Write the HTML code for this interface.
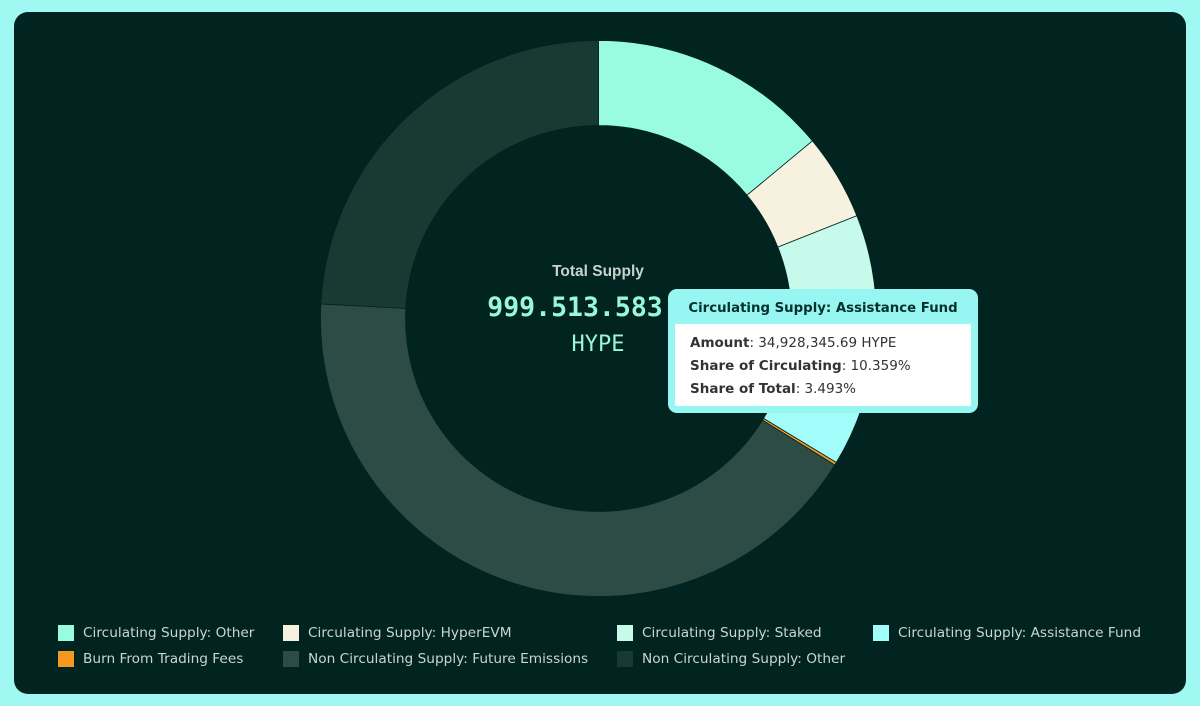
<!DOCTYPE html><html><head><style>
body{margin:0;width:1200px;height:706px;background:#9ff9f2;overflow:hidden;font-family:"DejaVu Sans",Verdana,sans-serif}
.card{position:absolute;left:14px;top:12px;width:1172px;height:682px;background:#022420;border-radius:14px}
svg{position:absolute;left:0;top:0}
.t1{position:absolute;left:498px;top:263px;width:200px;text-align:center;color:#c8d2ce;font-family:"Liberation Sans",sans-serif;font-weight:bold;font-size:15.5px}
.t2{position:absolute;left:425px;top:292px;width:300px;text-align:center;color:#98f7dd;font-family:"DejaVu Sans Mono","Liberation Mono",monospace;font-weight:bold;font-size:26.5px}
.t3{position:absolute;left:498px;top:332px;width:200px;text-align:center;color:#98f7dd;font-family:"DejaVu Sans Mono","Liberation Mono",monospace;font-size:22px}
.tip{position:absolute;left:668px;top:289px;width:310px;height:124px;background:#98f6f2;border-radius:9px}
.tip h{position:absolute;left:0;width:310px;top:12px;text-align:center;font-weight:bold;font-size:13.3px;color:#06302b}
.tip .b{position:absolute;left:7px;top:35px;width:296px;height:82px;background:#fff;border-radius:2px;font-size:13.5px;color:#333}
.tip .b div{position:absolute;left:15px;white-space:nowrap}
.leg{position:absolute;font-size:13.7px;color:#c8d5d1;white-space:nowrap}
.sq{position:absolute;width:16px;height:16px}
</style></head><body>
<div class="card"></div>
<svg width="1200" height="706" id="s"></svg>
<div class="t1">Total Supply</div>
<div class="t2">999.513.583</div>
<div class="t3">HYPE</div>
<div class="tip"><h>Circulating Supply: Assistance Fund</h>
<div class="b"><div style="top:11px"><b>Amount</b>: 34,928,345.69 HYPE</div>
<div style="top:34px"><b>Share of Circulating</b>: 10.359%</div>
<div style="top:57px"><b>Share of Total</b>: 3.493%</div></div></div>
<div class="sq" style="left:58px;top:625px;background:#98fbe2"></div><div class="leg" style="left:83px;top:625px">Circulating Supply: Other</div>
<div class="sq" style="left:283px;top:625px;background:#f7f1df"></div><div class="leg" style="left:308px;top:625px">Circulating Supply: HyperEVM</div>
<div class="sq" style="left:617px;top:625px;background:#c6fbec"></div><div class="leg" style="left:642px;top:625px">Circulating Supply: Staked</div>
<div class="sq" style="left:873px;top:625px;background:#a2fdfa"></div><div class="leg" style="left:898px;top:625px">Circulating Supply: Assistance Fund</div>
<div class="sq" style="left:58px;top:651px;background:#f39a1e"></div><div class="leg" style="left:83px;top:651px">Burn From Trading Fees</div>
<div class="sq" style="left:283px;top:651px;background:#2c4c45"></div><div class="leg" style="left:308px;top:651px">Non Circulating Supply: Future Emissions</div>
<div class="sq" style="left:617px;top:651px;background:#173a33"></div><div class="leg" style="left:642px;top:651px">Non Circulating Supply: Other</div>
<script>
var cx=598.5,cy=318.5,R=278,r=193;
var seg=[[0,50.3,"#98fbe2"],[50.3,68.3,"#f7f1df"],[68.3,108.8,"#c6fbec"],[108.8,121.2,"#a2fdfa"],[121.2,121.8,"#f39a1e"],[121.8,273,"#2c4c45"],[273,360,"#173a33"]];
function p(a,rad){a=a*Math.PI/180;return [cx+rad*Math.sin(a),cy-rad*Math.cos(a)]}
var h="";
seg.forEach(function(s){var a=p(s[0],R),b=p(s[1],R),c=p(s[1],r),d=p(s[0],r),l=(s[1]-s[0])>180?1:0;
h+='<path d="M'+a+' A'+R+' '+R+' 0 '+l+' 1 '+b+' L'+c+' A'+r+' '+r+' 0 '+l+' 0 '+d+'Z" fill="'+s[2]+'" stroke="#022420" stroke-width="0.8"/>';});
document.getElementById("s").innerHTML=h;
</script>
</body></html>
